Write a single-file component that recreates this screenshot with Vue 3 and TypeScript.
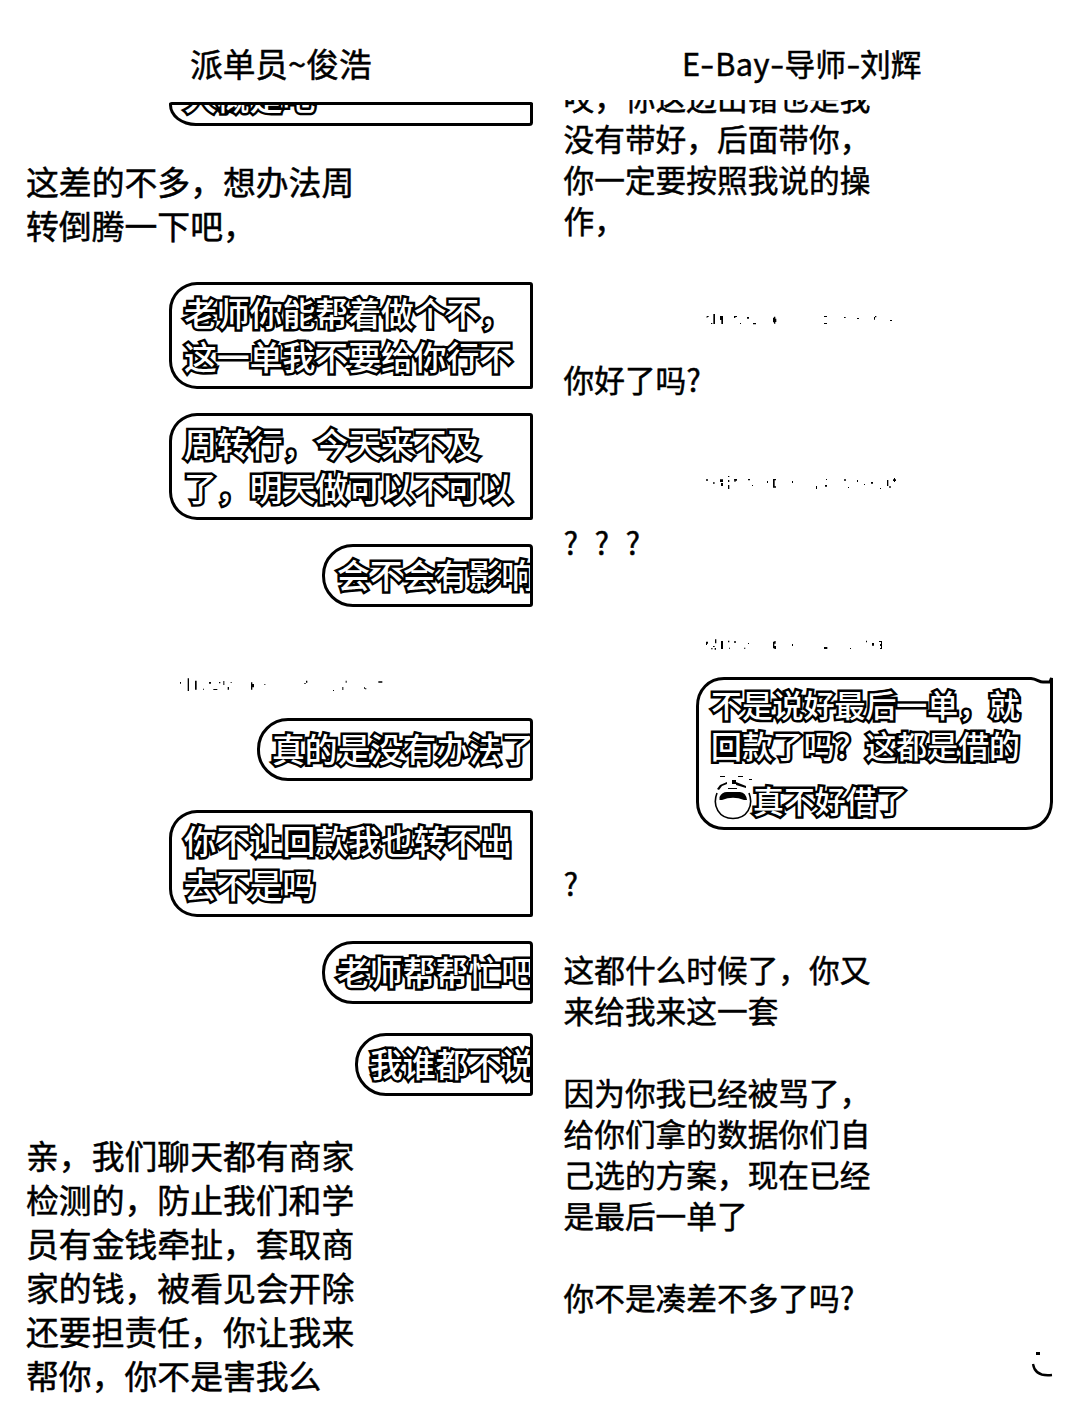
<script setup lang="ts">
interface Entry {
  kind: 'text' | 'bubble' | 'stamp' | 'tailed'
  gap: number
  x?: number
  lines?: string[]
  marks?: string
  wide?: boolean
}

const left: Entry[] = [
  { kind: 'text', gap: 33, lines: ['这差的不多，想办法周', '转倒腾一下吧，'] },
  { kind: 'bubble', gap: 33, x: 169, lines: ['老师你能帮着做个不，', '这一单我不要给你行不'] },
  { kind: 'bubble', gap: 24, x: 169, lines: ['周转行，今天来不及', '了，明天做可以不可以'] },
  { kind: 'bubble', gap: 24, x: 322, lines: ['会不会有影响'] },
  {
    kind: 'stamp', gap: 71, x: 160,
    marks: 'M60 12h3v5h-3z M83 1h4v38h-4z M105 8h5v27h-5z M129 32h3v3h-3z M147 12h6v5h-6z M160 33h12v3h-12z M177 12h4v4h-4z M190 9h3v12h-3z M203 27h4v8h-4z M212 12h3v3h-3z M273 13h4v22h-4z M277 18h5v10h-5z M313 18h3v3h-3z M433 15h4v3h-4z M438 8h4v6h-4z M519 36h3v3h-3z M547 27h3v9h-3z M557 8h3v6h-3z M612 28h3v4h-3z M615 31h4v3h-4z M655 10h12v4h-12z',
  },
  { kind: 'bubble', gap: 26, x: 257, lines: ['真的是没有办法了'] },
  { kind: 'bubble', gap: 29, x: 169, lines: ['你不让回款我也转不出', '去不是吗'] },
  { kind: 'bubble', gap: 24, x: 322, lines: ['老师帮帮忙吧'] },
  { kind: 'bubble', gap: 29, x: 355, lines: ['我谁都不说'] },
  {
    kind: 'text', gap: 37,
    lines: ['亲，我们聊天都有商家', '检测的，防止我们和学', '员有金钱牵扯，套取商', '家的钱，被看见会开除', '还要担责任，你让我来', '帮你，你不是害我么'],
  },
]

const right: Entry[] = [
  { kind: 'text', gap: -24, lines: ['哎，你这边出错也是我', '没有带好，后面带你，', '你一定要按照我说的操', '作，'] },
  {
    kind: 'stamp', gap: 71,
    marks: 'M50 9h6v3h-4v3h-2z M70 3h5v30h-5z M63 30h4v3h-4z M90 9h9v24h-5v-12h-4z M132 9h9v3h-5v3h-4z M150 30h3v3h-3z M171 12h6v5h-6z M189 30h9v4h-9z M249 14h3v14h-3z M252 11h4v21h-4z M256 17h3v10h-3z M402 9h9v3h-9z M402 30h9v3h-9z M462 12h5v3h-5z M501 15h6v3h-6z M552 12h3v8h-3z M555 9h4v4h-4z M600 21h6v3h-6z',
  },
  { kind: 'text', gap: 31, lines: ['你好了吗?'] },
  {
    kind: 'stamp', gap: 74,
    marks: 'M48 13h6v4h-6z M69 22h5v4h-5z M90 13h9v8h-9z M93 24h6v9h-6z M114 3h4v3h-4z M114 15h4v6h-4z M114 30h4v12h-4z M132 12h9v5h-4v3h-4z M174 12h6v4h-6z M186 30h3v3h-3z M231 18h3v6h-3z M249 12h9v4h-4v18h4v4h-9z M306 18h3v6h-3z M378 33h3v9h-3z M408 12h3v3h-3z M405 30h6v5h-6z M462 13h6v4h-6z M474 36h3v3h-3z M501 15h3v6h-3z M522 27h3v3h-3z M543 21h6v5h-6z M570 39h3v3h-3z M591 15h4v18h-4z M598 33h4v6h-4z M609 13h9v5h-9z M612 9h3v12h-3z',
  },
  { kind: 'text', gap: 32, wide: true, lines: ['???'] },
  {
    kind: 'stamp', gap: 74,
    marks: 'M48 11h6v6h-3v4h-3z M75 4h4v12h-4z M69 24h5v3h-5z M63 31h5v3h-5z M74 30h4v5h-4z M93 9h6v24h-6z M114 8h4v5h-4z M117 29h3v3h-3z M132 10h6v4h-6z M174 15h3v3h-3z M162 29h4v3h-4z M249 11h4v20h-4z M253 9h4v8h-4z M253 24h5v9h-5z M306 18h3v6h-3z M402 27h10v6h-10z M480 30h3v3h-3z M528 8h3v5h-3z M546 15h6v8h-6z M567 9h9v24h-6v-3h3v-6h-3v-6h3v-6h-6z',
  },
  { kind: 'tailed', gap: 24, lines: ['不是说好最后一单，就', '回款了吗？这都是借的', '真不好借了'] },
  { kind: 'text', gap: 32, lines: ['?'] },
  { kind: 'text', gap: 43, lines: ['这都什么时候了，你又', '来给我来这一套'] },
  { kind: 'text', gap: 39, lines: ['因为你我已经被骂了，', '给你们拿的数据你们自', '己选的方案，现在已经', '是最后一单了'] },
  { kind: 'text', gap: 39, lines: ['你不是凑差不多了吗?'] },
]
</script>

<template>
  <main class="screen">
    <section class="pane pane-left">
      <h1 class="title">派单员~俊浩</h1>
      <div class="thread">
        <div class="bubble cut"><span class="cut-line">大概是吧</span></div>
        <template v-for="(e, i) in left" :key="i">
          <div v-if="e.kind === 'text'" class="text" :style="{ marginTop: e.gap + 'px' }">
            <p v-for="l in e.lines" :key="l">{{ l }}</p>
          </div>
          <div v-else-if="e.kind === 'bubble'" class="bubble" :class="{ single: e.lines?.length === 1 }" :style="{ marginTop: e.gap + 'px', marginLeft: e.x + 'px' }">
            <p v-for="l in e.lines" :key="l" class="outlined">{{ l }}</p>
          </div>
          <svg v-else class="stamp" viewBox="0 0 720 42" :style="{ marginTop: e.gap + 'px' }"><path :d="e.marks" /></svg>
        </template>
      </div>
    </section>

    <section class="pane pane-right">
      <h1 class="title"><span class="latin">E<i>-</i>Bay<i>-</i></span>导师<i>-</i>刘辉</h1>
      <div class="thread">
        <template v-for="(e, i) in right" :key="i">
          <div v-if="e.kind === 'text'" class="text" :class="{ wide: e.wide }" :style="{ marginTop: e.gap + 'px' }">
            <p v-for="l in e.lines" :key="l">{{ l }}</p>
          </div>
          <svg v-else-if="e.kind === 'stamp'" class="stamp" viewBox="0 0 720 42" :style="{ marginTop: e.gap + 'px' }"><path :d="e.marks" /></svg>
          <div v-else class="tailed" :style="{ marginTop: e.gap + 'px' }">
            <svg class="frame" viewBox="0 0 358 154">
              <path d="M28 2.500H335C341 3 343 6 347 6H354L355.500 2V126C355 141 345 152.500 330 152.500H28C13 152.500 1.500 141 1.500 126V30C1.500 14 13 2.500 28 2.500Z" />
            </svg>
            <p class="outlined">{{ e.lines?.[0] }}</p>
            <p class="outlined">{{ e.lines?.[1] }}</p>
            <p class="outlined emoji-line">
              <svg class="emoji" viewBox="0 0 40 45">
                <path d="M4 18C-1 31 6 43.500 20 43.500S41 31 36 18" fill="none" stroke="#000" stroke-width="1.600" />
                <path d="M6.500 25V22Q9 17 14 17H27Q33 17.500 34 25H31Q20 20.500 9 25Z" />
                <path d="M7 1h5v1H7zM25 1h5v1h-5zM36 4h3v1h-3zM19 5h4v4h-4zM4 14l3-4 7-3v2L9 11l-3 4zM23 7l10 4v2l-10-3zM15 13h9v1h-9z" />
              </svg><span>{{ e.lines?.[2] }}</span>
            </p>
          </div>
        </template>
      </div>
    </section>

    <svg class="corner" viewBox="0 0 23 26">
      <path d="M5 0h4v3H5z" />
      <path d="M2 12Q4 25 21 23" fill="none" stroke="#000" stroke-width="2.300" />
    </svg>
  </main>
</template>

<style>
body {
  margin: 0;
  background: #fff;
}
</style>

<style scoped>
.screen {
  position: relative;
  display: flex;
  width: 1080px;
  height: 1424px;
  overflow: hidden;
  background: #fff;
  color: #000;
  font-family: "Noto Sans CJK SC", sans-serif;
}
.pane {
  display: flex;
  flex-direction: column;
}
.pane-left {
  width: 533px;
  --pitch: 32.85px;
  --line: 44px;
}
.pane-right {
  width: 547px;
  --pitch: 30.7px;
  --line: 41px;
}
.title {
  flex: none;
  margin: 0;
  box-sizing: border-box;
  font-weight: 400;
  line-height: 44px;
  white-space: nowrap;
  -webkit-text-stroke: 0.5px #000;
}
.title i {
  font-style: normal;
  display: inline-block;
  transform: scaleX(1.3);
  margin: 0 1.8px;
}
.latin {
  letter-spacing: 0.4px;
}
.pane-left .title {
  height: 102px;
  padding: 41px 0 0 190px;
  font-size: 32.7px;
}
.pane-right .title {
  height: 100px;
  padding: 41px 0 0 149px;
  font-size: 30.7px;
}
.thread {
  flex: 1;
  display: flow-root;
  overflow: hidden;
  font-size: var(--pitch);
  line-height: var(--line);
}
p {
  margin: 0;
  height: var(--line);
  white-space: nowrap;
}
.text {
  padding-bottom: 2px;
  -webkit-text-stroke: 0.5px #000;
}
.pane-left .text {
  padding-left: 26px;
}
.pane-right .text {
  padding-left: 30.500px;
}
.wide {
  letter-spacing: 16.400px;
}
.bubble {
  box-sizing: border-box;
  height: 107px;
  padding: 5px 0 0 12px;
  border: 3px solid #000;
  border-radius: 28px 3px 2px 28px;
  overflow: hidden;
}
.single {
  height: 63px;
  padding-top: 5px;
  border-radius: 31px 4px 3px 31px;
}
.outlined,
.cut-line {
  color: #fff;
  font-weight: 500;
  -webkit-text-stroke: 5px #000;
  paint-order: stroke fill;
}
.cut {
  display: flex;
  align-items: flex-end;
  height: 24px;
  margin-left: 169px;
  padding: 0 0 9px 12px;
  border-radius: 3px 2px 4px 28px / 3px 2px 4px 22px;
}
.cut-line {
  line-height: 36px;
}
.stamp {
  display: block;
  width: 240px;
  height: 14px;
}
.pane-left .stamp {
  margin-left: 160px;
}
.pane-right .stamp {
  margin-left: 157px;
}
.tailed {
  position: relative;
  box-sizing: border-box;
  width: 358px;
  height: 154px;
  margin-left: 163px;
  padding: 7px 0 0 15px;
  font-size: 30.900px;
}
.frame {
  position: absolute;
  inset: 0;
  width: 358px;
  height: 154px;
  fill: none;
  stroke: #000;
  stroke-width: 3;
}
.tailed p {
  position: relative;
}
.emoji-line {
  display: flex;
  align-items: center;
  margin-top: 14px;
}
.emoji {
  flex: none;
  width: 40px;
  height: 45px;
  margin: -5px 0 0 2px;
}
.corner {
  position: absolute;
  left: 1031px;
  top: 1352px;
  width: 23px;
  height: 26px;
}
</style>
